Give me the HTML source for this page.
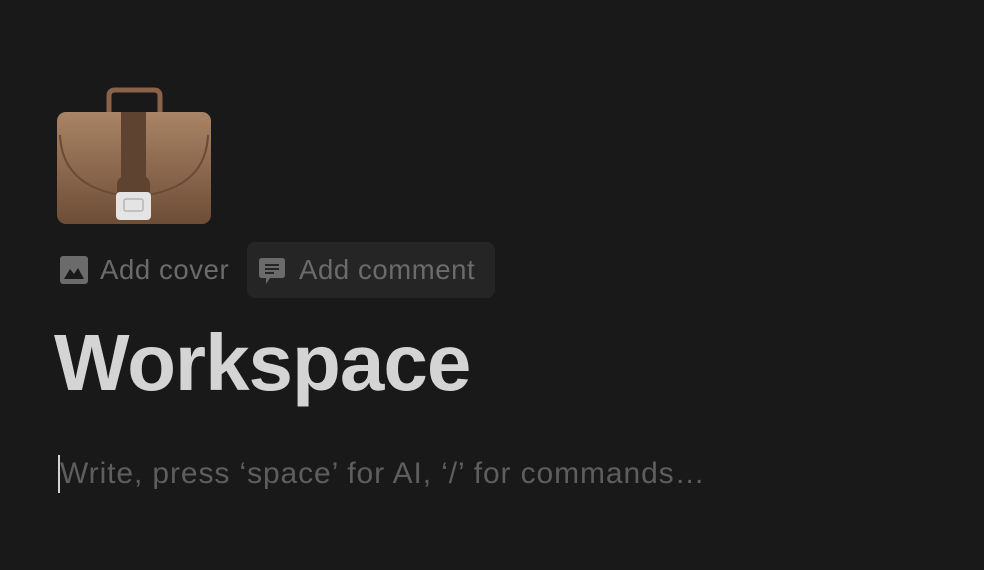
<!DOCTYPE html>
<html><head><style>
body{margin:0;width:984px;height:570px;background:#191919;overflow:hidden;font-family:"Liberation Sans",sans-serif;position:relative}
.abs{position:absolute}
.btn{color:#6b6b6b;font-size:27.5px;line-height:56px;white-space:nowrap;letter-spacing:0.6px}
</style></head><body>
<svg class="abs" style="left:55px;top:84px" width="160" height="144" viewBox="55 84 160 144">
<defs><linearGradient id="g" x1="0" y1="0" x2="0" y2="1"><stop offset="0" stop-color="#a98466"/><stop offset="1" stop-color="#6e4d37"/></linearGradient></defs>
<path d="M109 112 L109 96 Q109 90 115 90 L154 90 Q160 90 160 96 L160 112" fill="none" stroke="#8a6247" stroke-width="5"/>
<rect x="57" y="112" width="154" height="112" rx="9" fill="url(#g)"/>
<path d="M60 135 Q62 185 120 195 L148 195 Q206 185 208 135" fill="none" stroke="#6a4a34" stroke-width="2"/>
<rect x="121" y="112" width="25" height="80" fill="#5f4331"/>
<rect x="117" y="176" width="33" height="22" rx="8" fill="#5f4331"/>
<rect x="116" y="192" width="35" height="28" rx="4" fill="#e4e4e4"/>
<rect x="124" y="199" width="19" height="12" rx="2" fill="none" stroke="#b5b5b5" stroke-width="1.5"/>
</svg>
<svg class="abs" style="left:60px;top:256px" width="28" height="28" viewBox="0 0 28 28"><rect width="28" height="28" rx="3" fill="#6b6b6b"/><path d="M4 23 L10 13 L14 18 L18 12 L24 23Z" fill="#191919"/></svg>
<div class="abs btn" style="left:100px;top:242px">Add cover</div>
<div class="abs" style="left:247px;top:242px;width:248px;height:56px;border-radius:8px;background:#252525"></div>
<svg class="abs" style="left:258px;top:257px" width="28" height="28" viewBox="0 0 28 28"><path d="M4 1 H24 Q27 1 27 4 V18 Q27 21 24 21 H12 L8 27 V21 H4 Q1 21 1 18 V4 Q1 1 4 1Z" fill="#6b6b6b"/><path d="M7 8H21M7 12H21M7 16H16" stroke="#252525" stroke-width="2"/></svg>
<div class="abs btn" style="left:299px;top:242px">Add comment</div>
<div class="abs" style="left:54px;top:318px;font-size:80px;font-weight:bold;color:#d4d4d4;letter-spacing:-1px;line-height:90px">Workspace</div>
<div class="abs" style="left:58px;top:455px;width:2px;height:38px;background:#d4d4d4"></div>
<div class="abs" style="left:60px;top:455px;font-size:30px;line-height:38px;color:#5e5e5e;white-space:nowrap;letter-spacing:0.9px">Write, press ‘space’ for AI, ‘/’ for commands…</div>
</body></html>
